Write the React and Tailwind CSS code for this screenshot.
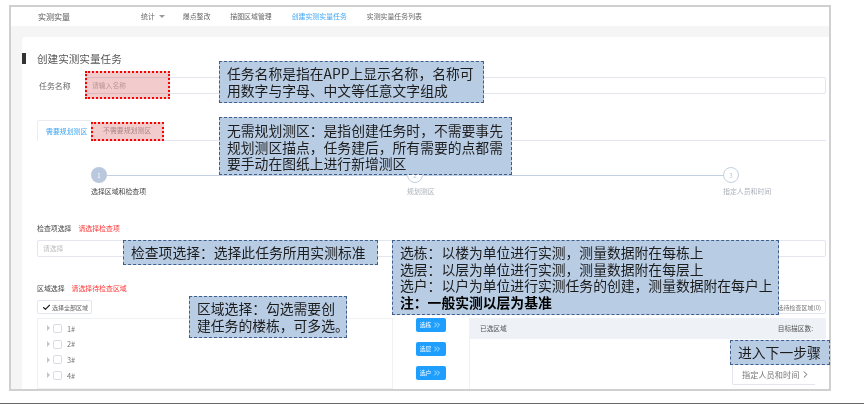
import { Check, ChevronRight, ChevronsRight } from "lucide-react";

const navItems = ["爆点整改", "描图区域管理", "创建实测实量任务", "实测实量任务列表"];
const floors = ["1#", "2#", "3#", "4#"];
const pickBtns = ["选栋", "选层", "选户"];

function Note({ className, children }) {
  return (
    <div className={"absolute bg-[#b8cce4] border border-dashed border-[#3f5f8a] text-[#1c1c1c] text-[13.8px] leading-[16.6px] whitespace-nowrap " + className}>
      {children}
    </div>
  );
}

function Step({ n, label, active, last }) {
  return (
    <div className="flex flex-col">
      <div className="flex items-center">
        <div className={active
          ? "w-[16px] h-[16px] rounded-full bg-[#b9c8dc] text-white text-[6px] flex items-center justify-center shrink-0"
          : "w-[16px] h-[16px] rounded-full bg-white border border-[#c3d0e2] text-[#b9c8dc] text-[6px] flex items-center justify-center shrink-0"}>
          {n}
        </div>
        {!last && <div className="flex-1 h-px bg-[#c3d0e2]" />}
      </div>
      <div className={active ? "mt-[2px] text-[6.9px] leading-[12px] text-[#444]" : "mt-[2px] text-[6.9px] leading-[12px] text-[#aab1ba]"}>{label}</div>
    </div>
  );
}

export default function App() {
  return (
    <div className="w-[864px] h-[404px] bg-white overflow-hidden font-['Noto_Sans_CJK_SC','Noto_Sans',sans-serif]">
      <div className="relative h-full pt-[5px] blur-[0.35px]">
        <div className="ml-[9px] w-[822px] h-[386px] border-2 border-[#d0d0d0] overflow-hidden bg-[#f5f5f5]">
          {/* top nav */}
          <div className="h-[19px] bg-white flex items-center text-[6.9px] text-[#666]">
            <div className="ml-[27px] w-[103px] text-[8px] text-[#555]">实测实量</div>
            <div className="flex items-center gap-[4px] mr-[18px]">
              <span>统计</span>
              <span className="w-0 h-0 border-x-[3px] border-x-transparent border-t-[3px] border-t-[#999]" />
            </div>
            <div className="flex gap-[20px]">
              {navItems.map(t => (
                <span key={t} className={t === "创建实测实量任务" ? "text-[#3fa6f5]" : ""}>{t}</span>
              ))}
            </div>
          </div>

          {/* card */}
          <div className="mt-[11px] ml-[11px] h-[360px] bg-white rounded-tl-[4px] pl-[15px] pr-[3px] text-[#666]">
            <div className="pt-[15px] flex items-center h-[29px] relative">
              <div className="absolute left-[-15px] top-[16px] w-[4px] h-[11px] bg-[#333]" />
              <span className="text-[10.6px] leading-[14px] text-[#555]">创建实测实量任务</span>
            </div>

            <div className="mt-[11px] flex items-center h-[17px]">
              <span className="ml-[2px] w-[46px] text-[7.9px]">任务名称</span>
              <div className="flex-1 h-full border border-[#e3e6ef] rounded-[2px] flex items-center pl-[6px] text-[6.8px] text-[#bbb]">请输入名称</div>
            </div>

            <div className="mt-[26px] flex h-[21px] border-b border-[#e3e6ef] text-[6.9px]">
              <div className="w-[55px] h-[21px] border-t border-l border-r border-[#e9ecf2] bg-white rounded-t-[2px] pl-[8px] flex items-center text-[#3fa6f5]">需要规划测区</div>
              <div className="ml-[11px] flex items-center text-[#aaa]">不需要规划测区</div>
            </div>

            <div className="mt-[26px] ml-[54px] grid grid-cols-[316px_316px_60px]">
              <Step n="1" label="选择区域和检查项" active />
              <Step n="2" label="规划测区" />
              <Step n="3" label="指定人员和时间" last />
            </div>

            <div className="mt-[25px] h-[12px] flex items-center gap-[7px] text-[6.9px]">
              <span className="text-[#444]">检查项选择</span>
              <span className="text-[#f33]">请选择检查项</span>
            </div>
            <div className="mt-[6px] h-[17px] border border-[#e3e6ef] rounded-[2px] flex items-center pl-[5px] text-[6.8px] text-[#bbb]">请选择</div>

            <div className="mt-[25px] h-[12px] flex items-center gap-[7px] text-[6.9px]">
              <span className="text-[#444]">区域选择</span>
              <span className="text-[#f33]">请选择待检查区域</span>
            </div>

            <div className="mt-[6px] flex justify-between h-[14px]">
              <div className="w-[55px] border border-[#e3e6ef] rounded-[2px] flex items-center pl-[4px] gap-[1px] text-[6px] text-[#666]">
                <Check className="w-[9px] h-[9px] text-[#222]" strokeWidth={3} />
                选择全部区域
              </div>
              <div className="w-[55px] border border-[#e3e6ef] rounded-[2px] flex items-center justify-end pr-[4px] text-[6px] text-[#777]">选待检查区域(0)</div>
            </div>

            <div className="mt-[4px] flex h-[71px]">
              <div className="w-[356px] border border-[#f0f1f5] pt-[1.5px] pl-[9px]">
                {floors.map(f => (
                  <div key={f} className="h-[15.7px] flex items-center">
                    <span className="w-0 h-0 border-y-[3.5px] border-y-transparent border-l-[3.5px] border-l-[#c4c4c4]" />
                    <span className="ml-[3px] w-[9px] h-[9px] border border-[#d8dce4] rounded-[2px]" />
                    <span className="ml-[5px] text-[7.4px] text-[#777]">{f}</span>
                  </div>
                ))}
              </div>
              <div className="w-[76px] pl-[23px] flex flex-col gap-[10px]">
                {pickBtns.map(b => (
                  <div key={b} className="w-[30px] h-[14px] rounded-[2px] bg-[#1e9fff] text-white text-[5.8px] flex items-center justify-center">
                    {b}
                    <ChevronsRight className="ml-[1px] w-[10px] h-[10px]" strokeWidth={1.6} />
                  </div>
                ))}
              </div>
              <div className="flex-1 border-l border-[#eef1f6] relative">
                <div className="h-[21px] bg-[#eef1f6] flex items-center justify-between pl-[10px] pr-[13px] text-[6.7px] text-[#555]">
                  <span>已选区域</span>
                  <span>目标描区数:</span>
                </div>
                <div className="absolute right-[11px] top-[46px] w-[83px] h-[21px] border border-r-0 border-[#e3e6ef] rounded-l-[2px] bg-white flex items-center pl-[9px] text-[8.2px] text-[#777]">
                  指定人员和时间
                  <ChevronRight className="ml-[1px] w-[11px] h-[11px] text-[#555]" strokeWidth={2} />
                </div>
              </div>
            </div>
          </div>
        </div>

        {/* red highlights */}
        <div className="absolute left-[85px] top-[71px] w-[85px] h-[28px] border-[2px] border-dotted border-[#f00] bg-[#c00000]/20" />
        <div className="absolute left-[91px] top-[122px] w-[73px] h-[19px] border-[2px] border-dotted border-[#f00] bg-[#c00000]/20" />

        {/* notes */}
        <Note className="left-[219px] top-[61px] w-[265px] h-[42px] pl-[7px] pt-[3px]">
          任务名称是指在APP上显示名称，名称可<br />用数字与字母、中文等任意文字组成
        </Note>
        <Note className="left-[219px] top-[117px] w-[293px] h-[58px] pl-[7px] pt-[4px]">
          无需规划测区：是指创建任务时，不需要事先<br />规划测区描点，任务建后，所有需要的点都需<br />要手动在图纸上进行新增测区
        </Note>
        <Note className="left-[123px] top-[240px] w-[255px] h-[25px] pl-[7px] pt-[3px]">
          检查项选择：选择此任务所用实测标准
        </Note>
        <Note className="left-[392px] top-[240px] w-[387px] h-[75px] pl-[7px] pt-[3px]">
          选栋：以楼为单位进行实测，测量数据附在每栋上<br />
          选层：以层为单位进行实测，测量数据附在每层上<br />
          选户：以户为单位进行实测任务的创建，测量数据附在每户上<br />
          <b className="font-bold text-black">注：一般实测以层为基准</b>
        </Note>
        <Note className="left-[189px] top-[296px] w-[158px] h-[42px] pl-[7px] pt-[3px]">
          区域选择：勾选需要创<br />建任务的楼栋，可多选。
        </Note>
        <Note className="left-[730px] top-[340px] w-[100px] h-[25px] pl-[7px] pt-[3px]">
          进入下一步骤
        </Note>

        <div className="absolute left-0 bottom-0 w-full h-[1px] bg-[#666]" />
      </div>
    </div>
  );
}
